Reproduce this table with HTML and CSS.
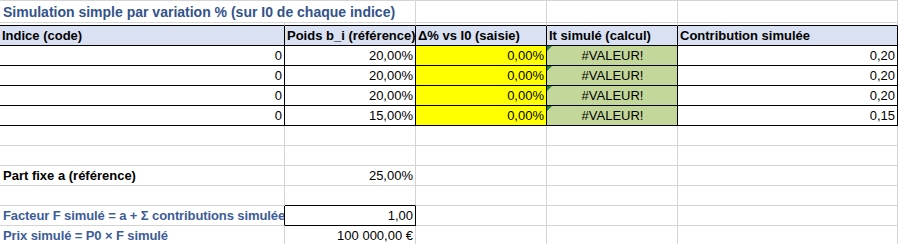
FILE: index.html
```html
<!DOCTYPE html>
<html lang="fr">
<head>
<meta charset="utf-8">
<title>Simulation simple par variation %</title>
<link rel="stylesheet" href="styles.css">
</head>
<body>
<div class="sheet">
  <div class="row r-title">
    <div class="c span2 title">Simulation simple par variation % (sur I0 de chaque indice)</div>
    <div class="c"></div>
    <div class="c"></div>
    <div class="c"></div>
  </div>
  <div class="row r-gap">
    <div class="c"></div><div class="c"></div><div class="c"></div><div class="c"></div><div class="c"></div>
  </div>
  <div class="row">
    <div class="c hd">Indice (code)</div>
    <div class="c hd">Poids b_i (référence)</div>
    <div class="c hd">Δ% vs I0 (saisie)</div>
    <div class="c hd">It simulé (calcul)</div>
    <div class="c hd">Contribution simulée</div>
  </div>
  <div class="row">
    <div class="c dt num">0</div>
    <div class="c dt num">20,00%</div>
    <div class="c dt num yel">0,00%</div>
    <div class="c dt ctr grn err">#VALEUR!</div>
    <div class="c dt num">0,20</div>
  </div>
  <div class="row">
    <div class="c dt num">0</div>
    <div class="c dt num">20,00%</div>
    <div class="c dt num yel">0,00%</div>
    <div class="c dt ctr grn err">#VALEUR!</div>
    <div class="c dt num">0,20</div>
  </div>
  <div class="row">
    <div class="c dt num">0</div>
    <div class="c dt num">20,00%</div>
    <div class="c dt num yel">0,00%</div>
    <div class="c dt ctr grn err">#VALEUR!</div>
    <div class="c dt num">0,20</div>
  </div>
  <div class="row">
    <div class="c dt num">0</div>
    <div class="c dt num">15,00%</div>
    <div class="c dt num yel">0,00%</div>
    <div class="c dt ctr grn err">#VALEUR!</div>
    <div class="c dt num">0,15</div>
  </div>
  <div class="row">
    <div class="c"></div><div class="c"></div><div class="c"></div><div class="c"></div><div class="c"></div>
  </div>
  <div class="row">
    <div class="c"></div><div class="c"></div><div class="c"></div><div class="c"></div><div class="c"></div>
  </div>
  <div class="row">
    <div class="c bold">Part fixe a (référence)</div>
    <div class="c num">25,00%</div>
    <div class="c"></div><div class="c"></div><div class="c"></div>
  </div>
  <div class="row">
    <div class="c"></div><div class="c box-top"></div><div class="c"></div><div class="c"></div><div class="c"></div>
  </div>
  <div class="row">
    <div class="c bold blue box-left">Facteur F simulé = a + Σ contributions simulées</div>
    <div class="c num box">1,00</div>
    <div class="c"></div><div class="c"></div><div class="c"></div>
  </div>
  <div class="row">
    <div class="c bold blue">Prix simulé = P0 × F simulé</div>
    <div class="c num">100 000,00 €</div>
    <div class="c"></div><div class="c"></div><div class="c"></div>
  </div>
</div>
</body>
</html>
```
FILE: styles.css
```css
html, body {
  margin: 0;
  padding: 0;
  background: #ffffff;
}

.sheet {
  width: 898px;
  border-top: 1px solid #d4d4d4;
  font-family: "Liberation Sans", Arial, sans-serif;
  font-size: 13px;
  color: #000000;
}

.row {
  display: grid;
  grid-template-columns: 285px 131px 131px 131px 220px;
  height: 20px;
}

.c {
  box-sizing: border-box;
  border-right: 1px solid #d4d4d4;
  border-bottom: 1px solid #d4d4d4;
  padding: 0 2px 0 3px;
  line-height: 19px;
  white-space: nowrap;
  overflow: hidden;
  position: relative;
}

.span2 {
  grid-column: span 2;
}

.r-title {
  height: 22px;
}

.title {
  font-size: 14px;
  font-weight: bold;
  color: #33538a;
  line-height: 22px;
  padding-top: 0;
}

.r-gap {
  height: 3px;
}

.r-gap .c {
  border-bottom-color: #000000;
  line-height: 2px;
}

.hd {
  background: #d9e1f2;
  font-weight: bold;
  border-right-color: #000000;
  border-bottom-color: #000000;
  padding-left: 2px;
  padding-right: 0;
}

.dt {
  border-right-color: #000000;
  border-bottom-color: #000000;
}

.num {
  text-align: right;
}

.ctr {
  text-align: center;
}

.yel {
  background: #ffff00;
}

.grn {
  background: #c4d79b;
}

.err::before {
  content: "";
  position: absolute;
  top: 0;
  left: 0;
  border-top: 5px solid #1f7a35;
  border-right: 5px solid transparent;
}

.bold {
  font-weight: bold;
}

.blue {
  color: #3d5c98;
  letter-spacing: -0.1px;
}

.box-top {
  border-bottom-color: #000000;
}

.box-left {
  border-right-color: #000000;
}

.box {
  border-right-color: #000000;
  border-bottom-color: #000000;
}
```
